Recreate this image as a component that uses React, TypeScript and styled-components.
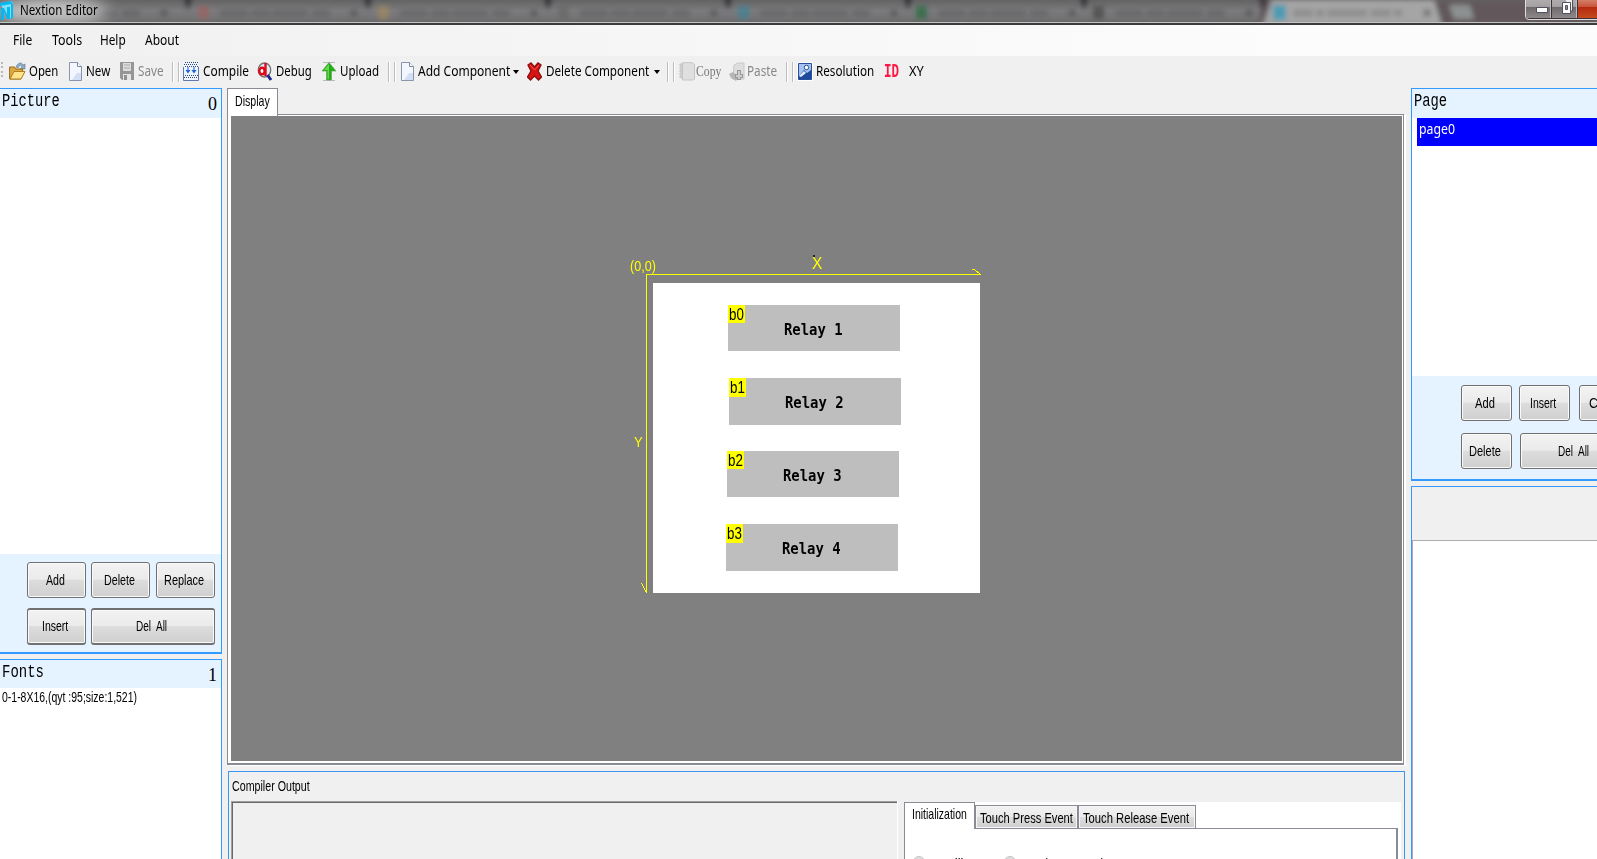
import React, { useLayoutEffect, useRef } from 'react';
import styled, { createGlobalStyle } from 'styled-components';

const GlobalStyle = createGlobalStyle`
  *{box-sizing:border-box}
  html,body{margin:0;padding:0;overflow:hidden;background:#f0f0f0}
  body{font-family:"Liberation Sans",Arial,sans-serif;color:#000}
`;

type Face = 'ui' | 'sans' | 'mono' | 'fixed' | 'serif';
const faces: Record<Face, string> = {
  ui: '"Noto Sans","Open Sans",sans-serif',
  sans: '"Liberation Sans",Arial,sans-serif',
  mono: '"Liberation Mono",monospace',
  fixed: '"DejaVu Sans Mono",monospace',
  serif: '"Liberation Serif",serif',
};

const FitBox = styled.span<{ $w: number; $face: Face; $size: number; $color?: string; $weight?: number; $lh: number }>`
  display:block;flex:none;width:${p => p.$w}px;height:${p => p.$lh}px;line-height:${p => p.$lh}px;
  font-family:${p => faces[p.$face]};font-size:${p => p.$size}px;font-weight:${p => p.$weight || 400};
  color:${p => p.$color || '#000'};white-space:pre;
`;
const FitInner = styled.span`display:inline-block;transform-origin:0 50%;`;

interface FitProps { w: number; children: string; face?: Face; size?: number; color?: string; weight?: number; lh?: number; className?: string }
/* A label squeezed horizontally to the given width. */
function Fit({ w, children, face = 'sans', size = 15, color, weight, lh = 18, className }: FitProps) {
  const ref = useRef<HTMLSpanElement>(null);
  useLayoutEffect(() => {
    const el = ref.current;
    if (el) el.style.transform = `scaleX(${w / el.offsetWidth})`;
  }, [w, children]);
  return (
    <FitBox className={className} $w={w} $face={face} $size={size} $color={color} $weight={weight} $lh={lh}>
      <FitInner ref={ref}>{children}</FitInner>
    </FitBox>
  );
}

const Window = styled.div`width:1597px;height:859px;overflow:hidden;display:flex;flex-direction:column;background:#f0f0f0;`;
const TitleBar = styled.header`
  position:relative;height:25px;flex:none;overflow:hidden;display:flex;
  background:linear-gradient(#636363,#7b7b7d 45%,#737375 80%,#666);
  border-bottom:2px solid #3c3a3b;
  &::after{content:"";position:absolute;left:0;right:0;bottom:0;height:1px;background:#c4c4c4}
`;
const Backdrop = styled.svg`position:absolute;left:0;top:0;`;
const TitleText = styled.div`position:relative;display:flex;padding:0 0 0 20px;`;
const Logo = styled.svg`position:absolute;left:0;top:1px;`;
const Controls = styled.div`
  position:absolute;left:1525px;top:-4px;width:90px;height:24px;display:flex;
  border:1px solid #ddd;border-radius:0 0 4px 4px;box-shadow:inset 0 0 0 1px #3b3538;background:#777;
`;
const Control = styled.div<{ $w: number; $red?: boolean }>`
  width:${p => p.$w}px;height:21px;border-right:1px solid #3b3538;box-shadow:inset -1px 0 #c0bcbc;
  background:${p => p.$red ? 'linear-gradient(#d99080,#c9563d 45%,#b52b10 50%,#c54a20)' : 'linear-gradient(#b5b0b0,#a5a0a1 45%,#706a6c 50%,#8d888a)'};
`;
const MenuBar = styled.nav`
  height:31px;flex:none;display:flex;padding:5px 0 0 13px;background:linear-gradient(90deg,#f0f0f0,#fcfcfc 80%);
`;
const MenuItem = styled(Fit)<{ $gap: number }>`margin-right:${p => p.$gap}px;`;
const ToolBar = styled.div`height:32px;flex:none;display:flex;align-items:flex-start;padding-top:6px;background:#f0f0f0;`;
const Grip = styled.div`width:2px;height:18px;margin:0 6px 0 1px;background:repeating-linear-gradient(#b8b8b8 0 2px,transparent 2px 4.5px);`;
const Tool = styled.div<{ $w: number }>`width:${p => p.$w}px;flex:none;display:flex;`;
const Icon = styled.svg`flex:none;display:block;`;
const Label = styled(Fit)<{ $ml: number }>`margin:-1px 0 0 ${p => p.$ml}px;`;
const Separator = styled.div<{ $w: number }>`
  flex:none;width:${p => p.$w}px;height:20px;
  background:linear-gradient(90deg,#bdbdbd 0 1px,#fff 1px 2px,transparent 2px 6px,#bdbdbd 6px 7px,#fff 7px 8px,transparent 8px);
`;
const Caret = styled.i<{ $ml: number }>`margin:8px 0 0 ${p => p.$ml}px;width:0;height:0;border:3px solid transparent;border-top:4px solid #000;border-bottom:0;`;

const Workspace = styled.main`flex:1;display:flex;min-height:0;`;
const LeftColumn = styled.aside`width:222px;flex:none;display:flex;flex-direction:column;`;
const RightColumn = styled.aside`width:186px;flex:none;display:flex;flex-direction:column;overflow:hidden;`;
const Panel = styled.section<{ $h?: number; $side: 'left' | 'right'; $thick?: boolean; $gray?: boolean }>`
  ${p => p.$h ? `height:${p.$h}px;flex:none;` : 'flex:1;'}
  display:flex;flex-direction:column;background:${p => p.$gray ? '#f0f0f0' : '#fff'};
  border:0 solid #3399ff;border-top-width:1px;border-${p => p.$side}-width:1px;border-bottom-width:${p => p.$thick ? 2 : 0}px;
`;
const Gap = styled.div<{ $h: number }>`height:${p => p.$h}px;flex:none;`;
const PanelHead = styled.div<{ $h: number }>`
  height:${p => p.$h}px;flex:none;background:#e4f3ff;display:flex;justify-content:space-between;padding:1px 4px 0 2px;
`;
const Count = styled(Fit)`margin-top:3px;`;
const Grow = styled.div`flex:1;`;
const FontRow = styled.div`padding:0 0 0 2px;`;
const ButtonArea = styled.div<{ $h: number; $pad: string; $gap: number }>`
  height:${p => p.$h}px;flex:none;background:#e4f3ff;padding:${p => p.$pad};display:flex;flex-direction:column;gap:${p => p.$gap}px;
`;
const ButtonRow = styled.div`display:flex;`;
const Button = styled.button<{ $w: number; $gap: number; $tall?: boolean }>`
  width:${p => p.$w}px;height:${p => p.$tall ? 37 : 36}px;flex:none;margin:0 ${p => p.$gap}px 0 0;padding:0 3px 1px 0;display:flex;align-items:center;justify-content:center;
  border:1px solid #707070;border-width:${p => p.$tall ? 2 : 1}px 1px;border-radius:3px;box-shadow:inset 0 0 0 1px #fafafa;
  background:linear-gradient(#f2f2f2,#ebebeb 48%,#dddddd 50%,#cfcfcf);
`;
const PageRow = styled.div`height:28px;margin-left:5px;padding:2px 0 0 2px;background:#0000ff;`;
const AttributeBox = styled.div`height:53px;flex:none;`;
const AttributeList = styled.div`flex:1;background:#fff;border-top:1px solid #abadb3;border-left:1px solid #abadb3;`;

const Center = styled.div`flex:1;display:flex;flex-direction:column;padding-left:5px;`;
const DisplayTab = styled.div`
  position:relative;z-index:1;width:51px;height:28px;flex:none;margin-bottom:-2px;background:#fff;border:1px solid #898c95;border-bottom:0;padding:3px 0 0 7px;
`;
const CanvasFrame = styled.div`
  position:relative;width:1177px;height:651px;flex:none;background:#808080;border:1px solid #898c95;border-bottom-width:2px;box-shadow:inset 0 0 0 1px #fff,inset 3px 0 #fff,inset 0 -2px #fff,2px 1px #fff;
`;
const Axes = styled.svg`position:absolute;left:0;top:0;`;
const Marker = styled(Fit)<{ $x: number; $y: number }>`position:absolute;left:${p => p.$x}px;top:${p => p.$y}px;`;
const Screen = styled.div`position:absolute;left:425px;top:168px;width:327px;height:310px;background:#fff;`;
const Relay = styled.div<{ $x: number; $y: number; $h: number }>`
  position:absolute;left:${p => p.$x}px;top:${p => p.$y}px;width:172px;height:${p => p.$h}px;background:#bebebe;padding:14px 0 0 56px;
`;
const Tag = styled.div<{ $h: number }>`position:absolute;left:0;top:0;width:17px;height:${p => p.$h}px;background:#ff0;padding-left:1px;`;

const Output = styled.section`
  width:1177px;margin:6px 0 0 1px;flex:1;min-height:0;border:1px solid #3c96f0;border-bottom:0;padding:5px 0 0 3px;display:flex;flex-direction:column;
`;
const OutputBody = styled.div`display:flex;flex:1;margin-top:5px;`;
const Log = styled.div`width:666px;flex:none;margin-left:-1px;border-top:1px solid #a0a0a0;border-left:1px solid #a0a0a0;box-shadow:inset 1px 1px #696969,1px 0 #fff;`;
const Events = styled.div`width:497px;margin:1px 0 0 7px;background:#fff;display:flex;flex-direction:column;overflow:hidden;`;
const Tabs = styled.div`display:flex;align-items:flex-end;height:26px;flex:none;`;
const EventTab = styled.div<{ $w: number; $active?: boolean }>`
  width:${p => p.$w}px;flex:none;border:1px solid #898c95;border-bottom:0;
  position:relative;z-index:${p => p.$active ? 1 : 0};margin-bottom:${p => p.$active ? -1 : 0}px;
  ${p => p.$active ? 'height:27px;background:#fff;padding:2px 0 0 7px;' : 'height:23px;background:linear-gradient(#f2f2f2,#ebebeb 48%,#ddd 50%,#cfcfcf);box-shadow:inset 0 0 0 1px #f7f7f7;padding:3px 0 0 4px;'}
`;
const EventPanel = styled.div`width:494px;height:32px;flex:none;border:1px solid #898c95;border-right-width:2px;padding:20px 0 0 8px;display:flex;`;
const Radio = styled.i`width:12px;height:12px;flex:none;border:1px solid #c4c4c4;border-radius:50%;margin:7px 5px 0 0;background:#ddd;`;
const RadioText = styled(Fit)`margin:6px 22px 0 2px;`;

const chromeTabs = [
  { x: 0, w: 185, icon: '' }, { x: 190, w: 175, icon: '#a2605c' }, { x: 370, w: 175, icon: '#a68a5c' }, { x: 550, w: 175, icon: '#666' },
  { x: 730, w: 175, icon: '#38849a' }, { x: 908, w: 173, icon: '#1b6a38' }, { x: 1085, w: 175, icon: '#444' },
];

const Glass = () => (
  <Backdrop width="1597" height="23">
    <defs>
      <filter id="soft" x="-20%" y="-50%" width="140%" height="200%"><feGaussianBlur stdDeviation="2.5" /></filter>
      <filter id="halo" x="-30%" y="-100%" width="160%" height="300%"><feGaussianBlur stdDeviation="8" /></filter>
    </defs>
    <g filter="url(#soft)">
      <path d="M1260 0H1597V25H1260Z" fill="#62595b" />
      {chromeTabs.map(t => (
        <g key={t.x}>
          <path d={`M${t.x + t.w - 2} -4h10l-5 14z`} fill="#38353a" />
          {t.icon && <rect x={t.x + 8} y="6" width="11" height="13" fill={t.icon} opacity=".65" />}
          <path d={`M${t.x + 30} 13h110`} stroke="#5e5e60" strokeWidth="7" strokeDasharray="28 3 19 2 36 4" opacity=".55" />
          <path d={`M${t.x + 161} 10l6 6m0-6l-6 6`} stroke="#58585a" strokeWidth="2.5" />
        </g>
      ))}
      <path d="M1263 25L1272 0H1434L1442 25Z" fill="#a5a5a6" />
      <rect x="1273" y="5" width="13" height="15" fill="#4c9bb2" />
      <path d="M1293 13h112" stroke="#777" strokeWidth="7" strokeDasharray="20 3 8 3 40 4" opacity=".5" />
      <path d="M1424 10l6 6m0-6l-6 6" stroke="#666" strokeWidth="2.5" />
      <path d="M1449 5h21l4 14h-20z" fill="#8d9192" />
    </g>
    <ellipse cx="52" cy="11" rx="55" ry="13" fill="#d5d5d5" opacity=".85" filter="url(#halo)" />
  </Backdrop>
);

const FileIcon = () => (
  <Icon width="13" height="19" viewBox="0 0 13 19">
    <path d="M.5.5h8l4 4v14H.5z" fill="#f3f6ff" stroke="#8a94ab" />
    <path d="M8 11h4v7H3z" fill="#d3def5" /><path d="M8.5.5v4h4" fill="#fff" stroke="#7b869d" />
  </Icon>
);
const icons = {
  open: <Icon width="17" height="18" viewBox="0 0 17 18"><path d="M7 5C9 0 13 0 14 3l2-1v5h-5l2-2c-1-2-3-2-4 1z" fill="#8eacc7" stroke="#5e7890" strokeWidth=".6" /><path d="M.6 17V5h5l1 2h7v4L12 17z" fill="#dda93c" stroke="#946b1d" /><path d="M1 17L5 9.5h11L12 17z" fill="#ffe38b" stroke="#af7e24" /></Icon>,
  file: <FileIcon />,
  save: <Icon width="15" height="19" viewBox="0 0 15 19"><path d="M0 0h14v18H2l-2-2z" fill="#969696" /><path d="M3 1h8v8H3z" fill="#dcdcdc" /><path d="M4 3h6M4 6h6" stroke="#aaa" /><path d="M3 12h8v6H3z" fill="#e5e5e5" /><path d="M4 13h3v5H4z" fill="#929292" /></Icon>,
  compile: <Icon width="16" height="19" viewBox="0 0 16 19"><path d="M.5.5h15v18H.5z" fill="#eef4ff" /><path d="M2 .5h13M1 2.5h13M2 4.5h13M2 13.5h13M1 15.5h13" stroke="#344871" strokeDasharray="1 1" /><path d="M.5 5v13.500h15V5" fill="none" stroke="#5d79ae" /><path d="M5 5v5M11 5v5" stroke="#3a78e0" strokeWidth="1.2" /><path d="M2.500 8h5L5 11.500zM8.500 8h5L11 11.500z" fill="#1b62db" /></Icon>,
  debug: <Icon width="16" height="19" viewBox="0 0 16 19"><ellipse cx="7.5" cy="8" rx="6.2" ry="7" fill="#e2ebf4" stroke="#777" strokeWidth="1.4" /><path d="M10.5 13l3.5 5" stroke="#1b2594" strokeWidth="3" /><ellipse cx="5" cy="9" rx="2.7" ry="3.3" fill="#fff" stroke="#e00818" strokeWidth="2.5" /><path d="M8.5 1v13" stroke="#e00818" strokeWidth="2.4" /></Icon>,
  upload: <Icon width="16" height="19" viewBox="0 0 16 19"><path d="M2 .5h12M2 18.5h12" stroke="#bbb" /><path d="M8 .5l7 8.5h-4.5v9h-5V9H1z" fill="#22ad16" stroke="#64a760" strokeWidth=".7" /><path d="M8 2v15h-1.5V8H3z" fill="#65d84c" /></Icon>,
  remove: <Icon width="15" height="19" viewBox="0 0 15 19"><path d="M1 3l3-2 3.5 4L11 1l3 2-3 6 3.500 6-3 3-4-4-4 4L.5 15l3.500-6z" fill="#d81313" stroke="#8d1010" strokeWidth="1.400" /><path d="M3 3l4.500 5L12 3" fill="none" stroke="#f15a55" /></Icon>,
  copy: <Icon width="17" height="19" viewBox="0 0 17 19"><path d="M1 2h5v14H1z" fill="#d0d0d0" stroke="#c2c2c2" strokeDasharray="2 1" /><path d="M3.5.7h10l2 2V17l-2 1h-10z" fill="#dfdfdf" stroke="#c4c4c4" /></Icon>,
  paste: <Icon width="16" height="20" viewBox="0 0 16 20"><path d="M5 3l4-2h6v16H4z" fill="#dedede" stroke="#c8c8c8" /><path d="M0 12l4-2 3 3 3 2-3 4-5-3z" fill="#b5b5b5" /><path d="M10 8v10M6 14h8" stroke="#989898" strokeWidth="4" /><path d="M10 9v8M7 14h6" stroke="#cdcdcd" strokeWidth="2" /></Icon>,
  resolution: <Icon width="16" height="19" viewBox="0 0 16 19"><path d="M.5.5h15v18H.5z" fill="#fff" stroke="#fff" /><path d="M1.5 1.5h13v16h-13z" fill="#a3c2ee" stroke="#284f99" /><path d="M2 14l5-6 3 3 4-3v9H2z" fill="#1e4a9b" /><circle cx="9.5" cy="5.5" r="2.2" fill="#fff" stroke="#234d98" /><path d="M2 14l5-5 2 2-5 4z" fill="#e5efff" /></Icon>,
};

const ToolLabel = ({ w, ml = 4, text, gray }: { w: number; ml?: number; text: string; gray?: boolean }) =>
  <Label $ml={ml} w={w} face="ui" size={14.5} color={gray ? '#888' : '#000'}>{text}</Label>;

const relays = [
  { x: 75, y: 22, h: 46, t: 18 }, { x: 76, y: 95, h: 47, t: 19 }, { x: 74, y: 168, h: 46, t: 18 }, { x: 73, y: 241, h: 47, t: 19 },
];

const PushButton = ({ w, gap = 0, text, tw, tall }: { w: number; gap?: number; text: string; tw: number; tall?: boolean }) =>
  <Button $w={w} $gap={gap} $tall={tall}><Fit w={tw} size={14.5}>{text}</Fit></Button>;

export default function App() {
  return (
    <Window>
      <GlobalStyle />
      <TitleBar>
        <Glass />
        <Logo width="15" height="21" viewBox="0 0 15 21"><path d="M0 3L11 0l2 2v14l-3 1z" fill="#7ee0fa" /><path d="M0 2l11-2 2 3v14l-2 1V3L0 5zM1 7h3l3 7V6h3v12H7l-3-7v8H1z" fill="#08b8f0" /></Logo>
        <TitleText><Fit w={78} face="ui" size={14.5}>Nextion Editor</Fit></TitleText>
        <Controls>
          <Control $w={29} /><Control $w={28} /><Control $w={40} $red />
        </Controls>
        <Backdrop width="1597" height="23">
          <path d="M1536.500 7.500h11v5h-11z" fill="#fff" stroke="#50505f" />
          <path d="M1565.500 -1h7v12h-3" fill="#eee" stroke="#50505f" />
          <path d="M1562.500 2.500h8v11h-8z" fill="#fff" stroke="#50505f" /><path d="M1565.500 5.500h2v4h-2z" fill="#999" stroke="#50505f" />
        </Backdrop>
      </TitleBar>
      <MenuBar>
        <MenuItem $gap={20} w={19} face="ui" size={14.5}>File</MenuItem>
        <MenuItem $gap={18} w={30} face="ui" size={14.5}>Tools</MenuItem>
        <MenuItem $gap={19} w={26} face="ui" size={14.5}>Help</MenuItem>
        <MenuItem $gap={0} w={34} face="ui" size={14.5}>About</MenuItem>
      </MenuBar>
      <ToolBar>
        <Grip />
        <Tool $w={60}>{icons.open}<ToolLabel w={29} text="Open" ml={3} /></Tool>
        <Tool $w={51}>{icons.file}<ToolLabel w={24} text="New" /></Tool>
        <Tool $w={52}>{icons.save}<ToolLabel w={26} text="Save" ml={3} gray /></Tool>
        <Separator $w={11} />
        <Tool $w={74}>{icons.compile}<ToolLabel w={46} text="Compile" /></Tool>
        <Tool $w={64}>{icons.debug}<ToolLabel w={36} text="Debug" ml={3} /></Tool>
        <Tool $w={67}>{icons.upload}<ToolLabel w={39} text="Upload" ml={3} /></Tool>
        <Separator $w={13} />
        <Tool $w={126}>{icons.file}<ToolLabel w={92} text="Add Component" /><Caret $ml={3} /></Tool>
        <Tool $w={140}>{icons.remove}<ToolLabel w={103} text="Delete Component" /><Caret $ml={5} /></Tool>
        <Separator $w={12} />
        <Tool $w={50}>{icons.copy}<Label $ml={0} w={25} face="serif" size={14.5} lh={20} color="#777">Copy</Label></Tool>
        <Tool $w={57}>{icons.paste}<ToolLabel w={30} text="Paste" ml={2} gray /></Tool>
        <Separator $w={11} />
        <Tool $w={87}>{icons.resolution}<ToolLabel w={58} text="Resolution" ml={3} /></Tool>
        <Fit w={15} face="mono" size={20} lh={20} weight={700} color="#ff1744">ID</Fit>
        <ToolLabel w={15} text="XY" ml={10} />
      </ToolBar>
      <Workspace>
        <LeftColumn>
          <Panel $h={566} $side="right" $thick>
            <PanelHead $h={29}><Fit w={58} face="mono" size={18} lh={22}>Picture</Fit><Count w={9} face="serif" size={18} lh={22}>0</Count></PanelHead>
            <Grow />
            <ButtonArea $h={98} $pad="8px 0 0 27px" $gap={10}>
              <ButtonRow><PushButton w={59} gap={5} text="Add" tw={19} /><PushButton w={59} gap={6} text="Delete" tw={31} /><PushButton w={59} text="Replace" tw={40} /></ButtonRow>
              <ButtonRow><PushButton tall w={59} gap={5} text="Insert" tw={26} /><PushButton tall w={124} text="Del  All" tw={31} /></ButtonRow>
            </ButtonArea>
          </Panel>
          <Gap $h={5} />
          <Panel $side="right">
            <PanelHead $h={28}><Fit w={42} face="mono" size={18} lh={22}>Fonts</Fit><Count w={9} face="serif" size={18} lh={22}>1</Count></PanelHead>
            <FontRow><Fit w={135} size={14.5}>0-1-8X16,(qyt :95;size:1,521)</Fit></FontRow>
          </Panel>
        </LeftColumn>
        <Center>
          <DisplayTab><Fit w={35} size={14.5}>Display</Fit></DisplayTab>
          <CanvasFrame>
            <Axes width="1175" height="640" fill="none" stroke="#ff0" shapeRendering="crispEdges">
              <path d="M418.500 478V159.500H753M744 154.500h2l3 2 4 3M413.500 468l5 10" />
              <path d="M585 140.500h2" stroke="#222" strokeWidth="2" />
            </Axes>
            <Marker $x={402} $y={142} w={26} size={14.5} color="#ff0">(0,0)</Marker>
            <Marker $x={584} $y={140} w={10} size={17} color="#ff0">X</Marker>
            <Marker $x={406} $y={318} w={9} size={14.5} color="#ff0">Y</Marker>
            <Screen>
              {relays.map((r, i) => (
                <Relay key={i} $x={r.x} $y={r.y} $h={r.h}>
                  <Tag $h={r.t}><Fit w={15} size={16} lh={19}>{`b${i}`}</Fit></Tag>
                  <Fit w={59} face="fixed" size={16.5} weight={700} lh={21}>{`Relay ${i + 1}`}</Fit>
                </Relay>
              ))}
            </Screen>
          </CanvasFrame>
          <Output>
            <Fit w={78} size={14.5} lh={19}>Compiler Output</Fit>
            <OutputBody>
              <Log />
              <Events>
                <Tabs>
                  <EventTab $w={71} $active><Fit w={55} size={14.5}>Initialization</Fit></EventTab>
                  <EventTab $w={103}><Fit w={93} size={14.5}>Touch Press Event</Fit></EventTab>
                  <EventTab $w={118}><Fit w={106} size={14.5}>Touch Release Event</Fit></EventTab>
                </Tabs>
                <EventPanel>
                  <Radio /><RadioText w={50} size={14.5}>Auxiliary</RadioText>
                  <Radio /><RadioText w={80} size={14.5}>Load Command</RadioText>
                </EventPanel>
              </Events>
            </OutputBody>
          </Output>
        </Center>
        <RightColumn>
          <Panel $h={393} $side="left" $thick>
            <PanelHead $h={29}><Fit w={33} face="mono" size={18} lh={22}>Page</Fit></PanelHead>
            <PageRow><Fit w={36} face="ui" size={14} color="#fff">page0</Fit></PageRow>
            <Grow />
            <ButtonArea $h={103} $pad="9px 0 0 49px" $gap={12}>
              <ButtonRow><PushButton w={51} gap={7} text="Add" tw={20} /><PushButton w={51} gap={9} text="Insert" tw={26} /><PushButton w={51} text="Copy" tw={29} /></ButtonRow>
              <ButtonRow><PushButton w={51} gap={8} text="Delete" tw={32} /><PushButton w={110} text="Del  All" tw={31} /></ButtonRow>
            </ButtonArea>
          </Panel>
          <Gap $h={5} />
          <Panel $side="left" $gray><AttributeBox /><AttributeList /></Panel>
        </RightColumn>
      </Workspace>
    </Window>
  );
}
